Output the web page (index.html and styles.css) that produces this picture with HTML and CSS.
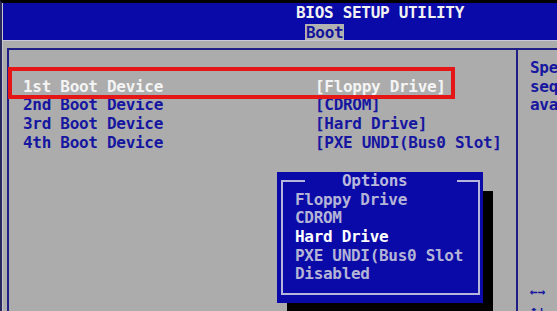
FILE: index.html
```html
<!DOCTYPE html>
<html>
<head>
<meta charset="utf-8">
<link rel="stylesheet" href="styles.css">
</head>
<body>
<div class="screen">
  <div class="inner">
    <header class="header">
      <div class="title">BIOS SETUP UTILITY</div>
      <div class="tabs"><span class="tab">Boot</span></div>
    </header>
    <div class="rule"></div>
    <main class="panel">
      <section class="main">
        <div class="row selected"><span class="label">1st Boot Device</span><span class="value">[Floppy Drive]</span></div>
        <div class="row"><span class="label">2nd Boot Device</span><span class="value">[CDROM]</span></div>
        <div class="row"><span class="label">3rd Boot Device</span><span class="value">[Hard Drive]</span></div>
        <div class="row"><span class="label">4th Boot Device</span><span class="value">[PXE UNDI(Bus0 Slot]</span></div>
      </section>
      <aside class="help">
        <div class="line">Spe</div>
        <div class="line">seq</div>
        <div class="line">ava</div>
        <div class="line keys k1">&larr;&rarr;</div>
        <div class="line keys k2">&uarr;&darr;</div>
      </aside>
    </main>
  </div>
  <div class="highlight"></div>
  <div class="popup">
    <fieldset class="options">
      <legend class="legend">Options</legend>
      <div class="opt">Floppy Drive</div>
      <div class="opt">CDROM</div>
      <div class="opt current">Hard Drive</div>
      <div class="opt">PXE UNDI(Bus0 Slot</div>
      <div class="opt">Disabled</div>
    </fieldset>
  </div>
</div>
</body>
</html>
```

FILE: styles.css
```css
* { box-sizing: border-box; }
html, body {
  margin: 0;
  padding: 0;
  background: #000;
}
body {
  width: 557px;
  height: 311px;
  overflow: hidden;
  font-family: "DejaVu Sans Mono", "Liberation Mono", monospace;
  font-weight: bold;
  font-size: 16px;
  letter-spacing: -0.3px;
}
.screen {
  position: relative;
  width: 557px;
  height: 311px;
  overflow: hidden;
  border-top: 3px solid #000;
  border-left: 2px solid #28285c;
  background: #acacac;
}
.inner {
  height: 100%;
  border-left: 1px solid #c6c6d0;
  display: flex;
  flex-direction: column;
}
.header {
  background: #0a0aa8;
  height: 37px;
  display: flex;
  flex-direction: column;
  gap: 1px;
}
.title {
  height: 19px;
  line-height: 19px;
  padding-left: 293px;
  color: #f2f2f2;
  white-space: nowrap;
}
.tabs {
  padding-left: 302px;
  height: 17px;
}
.tab {
  display: inline-block;
  height: 17px;
  line-height: 17px;
  padding: 0 1px;
  background: #b2b2b2;
  color: #14149a;
}
.rule {
  height: 1px;
  background: #c8c8da;
  flex: none;
}
.panel {
  flex: 1;
  margin-top: 7px;
  margin-left: 4px;
  border-top: 2px solid #1e1e86;
  border-left: 2px solid #1e1e86;
  display: flex;
}
.main {
  width: 507px;
  flex: none;
  padding: 27.7px 0 0 14px;
}
.row {
  display: grid;
  grid-template-columns: 292px auto;
  height: 18.7px;
  line-height: 18.7px;
  color: #1616a0;
  white-space: nowrap;
}
.row.selected { color: #f4f4f4; }
.help {
  flex: 1;
  border-left: 2px solid #1e1e86;
  padding: 9px 0 0 12px;
  display: grid;
  grid-auto-rows: 18.7px;
  align-content: start;
  color: #1616a0;
  white-space: nowrap;
  overflow: hidden;
}
.line { line-height: 18.7px; height: 18.7px; }
.keys { font-size: 13px; letter-spacing: 0; }
.k1 { grid-row: 13; }
.k2 { grid-row: 14; }
.highlight {
  position: absolute;
  left: 6px;
  top: 64px;
  width: 447px;
  height: 32px;
  border: 4px solid #e41616;
}
.popup {
  position: absolute;
  left: 275px;
  top: 169px;
  width: 206px;
  height: 131px;
  background: #0a0aa8;
  box-shadow: 10px 19px 0 #000;
  padding: 0 3px 8px 4px;
  display: flex;
}
.options {
  flex: 1;
  margin: 0;
  border: 2px solid #b6b6dc;
  padding: 0 0 0 12px;
  min-width: 0;
}
.legend {
  margin-left: 10px;
  padding: 0 50px 0 37px;
  height: 18.7px;
  line-height: 18.7px;
  color: #b8b8dc;
  background: #0a0aa8;
}
.opt {
  height: 18.7px;
  line-height: 18.7px;
  color: #b4b4d6;
  white-space: nowrap;
}
.opt.current { color: #ffffff; }
```
